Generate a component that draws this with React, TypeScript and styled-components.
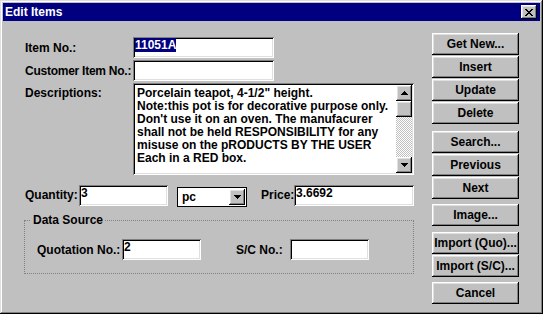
import styled, { createGlobalStyle } from "styled-components";

const GlobalStyle = createGlobalStyle`
  html, body { margin: 0; padding: 0; background: #c0c0c0; }
`;

const raised = `
  box-shadow: inset -1px -1px #000, inset 1px 1px #fff, inset -2px -2px #808080, inset 2px 2px #dfdfdf;
`;

const sunken = `
  box-shadow: inset 1px 1px #808080, inset -1px -1px #fff, inset 2px 2px #000, inset -2px -2px #dfdfdf;
`;

const Window = styled.div`
  width: 543px;
  height: 314px;
  box-sizing: border-box;
  padding: 3px;
  background: #c0c0c0;
  box-shadow: inset -1px -1px #000, inset 1px 1px #dfdfdf, inset -2px -2px #808080, inset 2px 2px #fff;
  display: flex;
  flex-direction: column;
  font-family: "Liberation Sans", Arial, sans-serif;
  font-weight: bold;
  font-size: 12px;
  line-height: 13px;
  color: #000;
`;

const TitleBar = styled.div`
  height: 18px;
  background: #000080;
  display: flex;
  align-items: center;
  justify-content: space-between;
  padding: 0 3px 0 2px;
`;

const Title = styled.span`
  color: #fff;
`;

const CloseButton = styled.div`
  width: 16px;
  height: 14px;
  background: #c0c0c0;
  ${raised}
  display: flex;
  align-items: center;
  justify-content: center;
`;

const Body = styled.div`
  flex: 1;
  display: flex;
  align-items: flex-start;
  padding: 12px 21px 0 21px;
`;

const LeftPanel = styled.div`
  width: 390px;
  margin-top: 4px;
  display: flex;
  flex-direction: column;
`;

const Row = styled.div<{ $mt?: number; $align?: string }>`
  display: flex;
  align-items: ${(p) => p.$align || "center"};
  margin-top: ${(p) => p.$mt || 0}px;
`;

const Label = styled.div<{ $w: number; $ml?: number; $pt?: number; $tight?: boolean }>`
  width: ${(p) => p.$w}px;
  margin-left: ${(p) => p.$ml || 0}px;
  padding: ${(p) => p.$pt || 1}px 0 0 1px;
  box-sizing: border-box;
  white-space: nowrap;
  letter-spacing: ${(p) => (p.$tight ? "-0.25px" : "normal")};
`;

const Field = styled.div<{ $w: number }>`
  width: ${(p) => p.$w}px;
  height: 21px;
  box-sizing: border-box;
  padding: 2px 2px 0 2px;
  background: #fff;
  ${sunken}
  white-space: nowrap;
  overflow: hidden;
`;

const Selected = styled.span`
  background: #000080;
  color: #fff;
`;

const DescBox = styled.div`
  width: 281px;
  height: 92px;
  box-sizing: border-box;
  padding: 2px;
  background: #fff;
  ${sunken}
  display: flex;
`;

const DescText = styled.div`
  flex: 1;
  padding: 2px 0 0 2px;
  white-space: pre-line;
  overflow: hidden;
`;

const ScrollBar = styled.div`
  width: 16px;
  display: flex;
  flex-direction: column;
`;

const ScrollButton = styled.div`
  height: 16px;
  background: #c0c0c0;
  ${raised}
  display: flex;
  align-items: center;
  justify-content: center;
`;

const ScrollTrack = styled.div`
  flex: 1;
  background: repeating-conic-gradient(#c0c0c0 0% 25%, #fff 0% 50%) 0 0 / 2px 2px;
`;

const Combo = styled.div`
  width: 70px;
  height: 20px;
  margin: 2px 0 0 9px;
  box-sizing: border-box;
  border: 1px solid #000;
  background: #fff;
  display: flex;
  align-items: center;
  justify-content: space-between;
  padding: 0 1px 0 4px;
`;

const ComboButton = styled(ScrollButton)`
  width: 16px;
`;

const GroupBox = styled.fieldset`
  margin: 7px 0 0 0;
  padding: 12px 0 13px 0;
  min-width: 0;
  border: 1px dotted #808080;
`;

const Legend = styled.legend`
  margin-left: 6px;
  padding: 0 2px;
`;

const GroupRow = styled(Row)`
  padding-left: 11px;
`;

const ButtonColumn = styled.div`
  margin-left: 18px;
  display: flex;
  flex-direction: column;
`;

const ButtonStack = styled.div<{ $mt?: number }>`
  display: flex;
  flex-direction: column;
  gap: 1px;
  margin-top: ${(p) => p.$mt || 0}px;
`;

const Button = styled.button`
  width: 87px;
  height: 22px;
  padding: 0;
  border: none;
  background: #c0c0c0;
  ${raised}
  font: inherit;
  color: #000;
  white-space: nowrap;
  text-align: center;
`;

const CloseGlyph = () => (
  <svg width="8" height="7" viewBox="0 0 8 7" shapeRendering="crispEdges">
    <path
      fill="#000"
      d="M0 0h2v1H0zM6 0h2v1H6zM1 1h2v1H1zM5 1h2v1H5zM2 2h4v1H2zM3 3h2v1H3zM2 4h4v1H2zM1 5h2v1H1zM5 5h2v1H5zM0 6h2v1H0zM6 6h2v1H6z"
    />
  </svg>
);

const Arrow = ({ down }: { down?: boolean }) => (
  <svg width="7" height="4" viewBox="0 0 7 4" shapeRendering="crispEdges">
    <path
      fill="#000"
      d={down ? "M0 0h7v1H0zM1 1h5v1H1zM2 2h3v1H2zM3 3h1v1H3z" : "M3 0h1v1H3zM2 1h3v1H2zM1 2h5v1H1zM0 3h7v1H0z"}
    />
  </svg>
);

const description = `Porcelain teapot, 4-1/2" height.
Note:this pot is for decorative purpose only.
Don't use it on an oven. The manufacurer
shall not be held RESPONSIBILITY for any
misuse on the pRODUCTS BY THE USER
Each in a RED box.`;

export default function App() {
  return (
    <>
      <GlobalStyle />
      <Window>
        <TitleBar>
          <Title>Edit Items</Title>
          <CloseButton>
            <CloseGlyph />
          </CloseButton>
        </TitleBar>
        <Body>
          <LeftPanel>
            <Row>
              <Label $w={109}>Item No.:</Label>
              <Field $w={141}>
                <Selected>11051A</Selected>
              </Field>
            </Row>
            <Row $mt={2}>
              <Label $w={109} $tight>Customer Item No.:</Label>
              <Field $w={141} />
            </Row>
            <Row $mt={2} $align="flex-start">
              <Label $w={109} $pt={4}>Descriptions:</Label>
              <DescBox>
                <DescText>{description}</DescText>
                <ScrollBar>
                  <ScrollButton>
                    <Arrow />
                  </ScrollButton>
                  <ScrollButton />
                  <ScrollTrack />
                  <ScrollButton>
                    <Arrow down />
                  </ScrollButton>
                </ScrollBar>
              </DescBox>
            </Row>
            <Row $mt={10} $align="flex-start">
              <Label $w={55} $pt={4}>Quantity:</Label>
              <Field $w={89}>3</Field>
              <Combo>
                <span>pc</span>
                <ComboButton>
                  <Arrow down />
                </ComboButton>
              </Combo>
              <Label $w={34} $ml={13} $pt={4}>Price:</Label>
              <Field $w={120}>3.6692</Field>
            </Row>
            <GroupBox>
              <Legend>Data Source</Legend>
              <GroupRow>
                <Label $w={86}>Quotation No.:</Label>
                <Field $w={79}>2</Field>
                <Label $w={55} $ml={34}>S/C No.:</Label>
                <Field $w={79} />
              </GroupRow>
            </GroupBox>
          </LeftPanel>
          <ButtonColumn>
            <ButtonStack>
              <Button>Get New...</Button>
              <Button>Insert</Button>
              <Button>Update</Button>
              <Button>Delete</Button>
            </ButtonStack>
            <ButtonStack $mt={7}>
              <Button>Search...</Button>
              <Button>Previous</Button>
              <Button>Next</Button>
            </ButtonStack>
            <ButtonStack $mt={5}>
              <Button>Image...</Button>
            </ButtonStack>
            <ButtonStack $mt={6}>
              <Button>Import (Quo)...</Button>
              <Button>Import (S/C)...</Button>
            </ButtonStack>
            <ButtonStack $mt={5}>
              <Button>Cancel</Button>
            </ButtonStack>
          </ButtonColumn>
        </Body>
      </Window>
    </>
  );
}
